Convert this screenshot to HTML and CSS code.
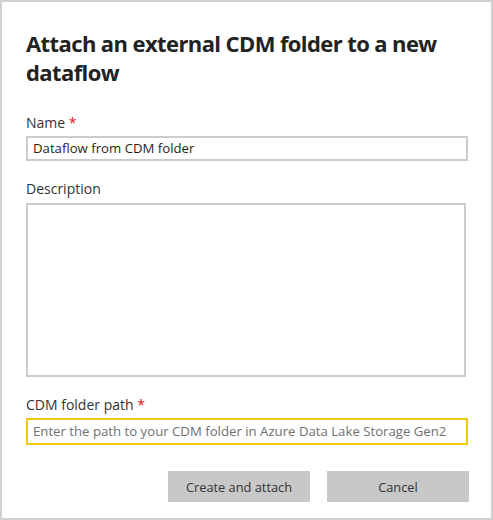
FILE: index.html
```html
<!DOCTYPE html>
<html>
<head>
<meta charset="utf-8">
<link rel="stylesheet" href="styles.css">
</head>
<body>
<div class="dialog">
  <h1 class="title">Attach an external CDM folder to a new dataflow</h1>
  <div class="field field-name">
    <label class="label">Name <span class="req">*</span></label>
    <div class="input">Dataflow from CDM folder</div>
  </div>
  <div class="field field-desc">
    <label class="label">Description</label>
    <div class="textarea"></div>
  </div>
  <div class="field field-path">
    <label class="label">CDM folder path <span class="req">*</span></label>
    <div class="input input-focus placeholder">Enter the path to your CDM folder in Azure Data Lake Storage Gen2</div>
  </div>
  <div class="actions">
    <button class="btn">Create and attach</button>
    <button class="btn">Cancel</button>
  </div>
</div>
</body>
</html>
```

FILE: styles.css
```css
html, body {
  margin: 0;
  padding: 0;
  background: #ffffff;
}
.dialog {
  box-sizing: border-box;
  width: 493px;
  height: 520px;
  border: 2px solid #d0d0d0;
  padding: 27px 23px 0 24px;
  font-family: "Open Sans", "Noto Sans", sans-serif;
  color: #333333;
}
.title {
  margin: 0;
  font-size: 22px;
  line-height: 29px;
  font-weight: 700;
  color: #222222;
  letter-spacing: -0.6px;
  padding-right: 20px;
}
.field {
  display: flex;
  flex-direction: column;
}
.label {
  font-size: 14px;
  line-height: 20px;
  color: #333333;
}
.req {
  color: #e81123;
}
.field-name {
  margin-top: 26px;
}
.input {
  box-sizing: border-box;
  margin-top: 3px;
  height: 25px;
  border: 2px solid #cccccc;
  padding: 0 5px;
  font-size: 13.2px;
  line-height: 21px;
  color: #1f1f1f;
  white-space: nowrap;
  overflow: hidden;
}
.input-focus {
  height: 27px;
  line-height: 23px;
  border-color: #f2c811;
}
.placeholder {
  color: #707070;
  font-size: 13.2px;
}
.field-desc {
  margin-top: 18px;
}
.textarea {
  box-sizing: border-box;
  margin-top: 4px;
  width: 440px;
  height: 174px;
  border: 2px solid #cccccc;
}
.field-path {
  margin-top: 18px;
}
.actions {
  display: flex;
  justify-content: flex-end;
  gap: 17px;
  margin-top: 26px;
  margin-right: -1px;
}
.btn {
  width: 142px;
  height: 31px;
  border: none;
  background: #c8c8c8;
  font-family: "Open Sans", "Noto Sans", sans-serif;
  font-size: 12.8px;
  color: #333333;
  padding: 0;
}
```
